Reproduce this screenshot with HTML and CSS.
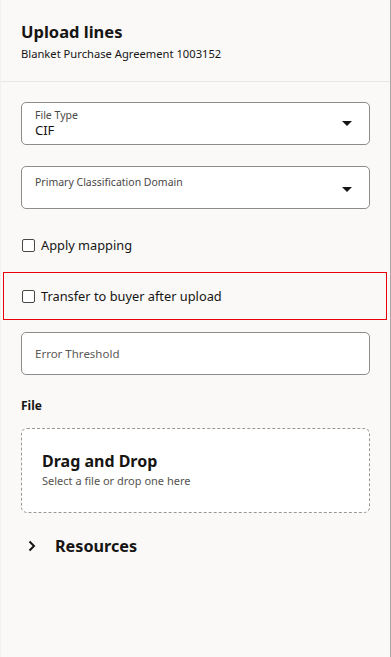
FILE: index.html
```html
<!DOCTYPE html>
<html lang="en">
<head>
  <meta charset="UTF-8" />
  <meta name="viewport" content="width=device-width, initial-scale=1.0" />
  <title>Upload lines</title>
  <link rel="stylesheet" href="styles.css">
</head>
<body>
  <div class="panel">
    <div class="header">
      <h1>Upload lines</h1>
      <p>Blanket Purchase Agreement 1003152</p>
    </div>

    <div class="content">
      <div class="field select">
        <div class="field-text">
          <span class="label">File Type</span>
          <span class="value">CIF</span>
        </div>
        <span class="caret"></span>
      </div>

      <div class="field select tall">
        <div class="field-text">
          <span class="label">Primary Classification Domain</span>
        </div>
        <span class="caret"></span>
      </div>

      <label class="check first">
        <span class="box"></span>
        Apply mapping
      </label>

      <div class="highlight">
        <label class="check">
          <span class="box"></span>
          Transfer to buyer after upload
        </label>
      </div>

      <div class="field input">
        <span class="placeholder">Error Threshold</span>
      </div>

      <div class="file-label">File</div>

      <div class="dropzone">
        <div class="drop-title">Drag and Drop</div>
        <div class="drop-sub">Select a file or drop one here</div>
      </div>

      <div class="resources">
        <svg class="chevron" width="10" height="12" viewBox="0 0 10 12">
          <path d="M2.5 1.5 L7 6 L2.5 10.5" fill="none" stroke="#161513" stroke-width="2"/>
        </svg>
        <span>Resources</span>
      </div>
    </div>
  </div>
</body>
</html>
```

FILE: styles.css
```css
html, body {
  margin: 0;
  padding: 0;
  height: 100%;
}
body {
  font-family: "Noto Sans", "Open Sans", sans-serif;
  color: #161513;
  background: #faf9f8;
}
.panel {
  height: 657px;
  box-sizing: border-box;
  border-right: 1px solid #a8a8a8;
  border-left: 1px solid #f2f1ef;
  background: #faf9f8;
}
.header {
  padding: 20px 20px 0 20px;
  height: 61px;
  border-bottom: 1px solid #e9e7e4;
}
.header h1 {
  margin: 0;
  font-size: 16.5px;
  line-height: 24px;
  font-weight: 700;
}
.header p {
  margin: 2px 0 0;
  font-size: 11.2px;
  line-height: 16px;
}
.content {
  padding: 20px 20px 0 20px;
}
.field {
  box-sizing: border-box;
  height: 43px;
  border: 1px solid #8e8c89;
  border-radius: 5px;
  background: #fff;
  display: flex;
  align-items: center;
  padding: 0 14px 0 13px;
}
.select {
  justify-content: space-between;
}
.field-text {
  display: flex;
  flex-direction: column;
}
.label {
  font-size: 10.5px;
  line-height: 13px;
  color: #4a4845;
}
.value {
  font-size: 13px;
  line-height: 16px;
  margin-bottom: 1px;
}
.tall {
  margin-top: 21px;
  align-items: flex-start;
  padding-top: 9px;
}
.tall .caret {
  margin-top: 11px;
}
.caret {
  width: 0;
  height: 0;
  border-left: 5px solid transparent;
  border-right: 5px solid transparent;
  border-top: 5px solid #161513;
  margin-right: 3px;
}
.check {
  display: flex;
  align-items: center;
  gap: 6px;
  font-size: 12.8px;
  line-height: 18px;
}
.check.first {
  margin: 27px 0 0 1px;
}
.box {
  box-sizing: border-box;
  width: 13px;
  height: 13px;
  border: 1px solid #4a4845;
  border-radius: 2px;
  background: #fff;
}
.highlight {
  margin: 18px -17px 0 -18px;
  height: 48px;
  box-sizing: border-box;
  border: 1px solid #e8000b;
  display: flex;
  align-items: center;
  padding-left: 18px;
}
.input {
  margin-top: 12px;
}
.placeholder {
  font-size: 11.5px;
  color: #5b5956;
}
.file-label {
  margin-top: 22px;
  font-size: 12px;
  font-weight: 700;
  line-height: 18px;
}
.dropzone {
  margin-top: 13px;
  height: 85px;
  box-sizing: border-box;
  border: 1px dashed #9a9895;
  border-radius: 6px;
  background: #fff;
  padding: 21px 20px 0 20px;
}
.drop-title {
  font-size: 16px;
  font-weight: 700;
  line-height: 22px;
}
.drop-sub {
  font-size: 11px;
  line-height: 16px;
  color: #55534f;
  margin-top: 1px;
}
.resources {
  display: flex;
  align-items: center;
  margin-top: 22px;
  padding-left: 6px;
  font-size: 16.2px;
  font-weight: 700;
}
.chevron {
  margin-right: 18px;
}
```
